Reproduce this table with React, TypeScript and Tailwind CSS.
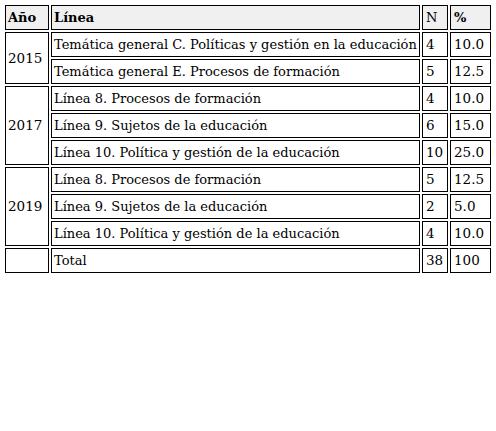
import React from "react";

type Row = { year?: string; span?: number; line: string; n: string; p: string };

const rows: Row[] = [
  { year: "2015", span: 2, line: "Temática general C. Políticas y gestión en la educación", n: "4", p: "10.0" },
  { line: "Temática general E. Procesos de formación", n: "5", p: "12.5" },
  { year: "2017", span: 3, line: "Línea 8. Procesos de formación", n: "4", p: "10.0" },
  { line: "Línea 9. Sujetos de la educación", n: "6", p: "15.0" },
  { line: "Línea 10. Política y gestión de la educación", n: "10", p: "25.0" },
  { year: "2019", span: 3, line: "Línea 8. Procesos de formación", n: "5", p: "12.5" },
  { line: "Línea 9. Sujetos de la educación", n: "2", p: "5.0" },
  { line: "Línea 10. Política y gestión de la educación", n: "4", p: "10.0" },
];

export default function App() {
  const td = "border border-black px-[2px] py-0 h-[25px] align-middle";
  const num = "border border-black pl-[3px] pr-0 py-0 h-[25px] align-middle text-[13.5px]";
  const th = "border border-black bg-[#f0f0f0] px-[2px] py-0 h-[25px] text-left align-middle";
  return (
    <div className="w-[496px] h-[431px] bg-white p-[3px] text-black text-[13px] leading-[19px]" style={{ fontFamily: '"DejaVu Serif", serif' }}>
      <table className="border-separate border-spacing-[2px] table-fixed w-[490px]">
        <colgroup>
          <col className="w-[44px]" />
          <col className="w-[369px]" />
          <col className="w-[26px]" />
          <col className="w-[41px]" />
        </colgroup>
        <thead>
          <tr>
            <th className={th + " font-bold"}>Año</th>
            <th className={th + " font-bold"}>Línea</th>
            <th className={th + " font-normal pl-[3px]"}>N</th>
            <th className={th + " font-bold pl-[3px]"}>%</th>
          </tr>
        </thead>
        <tbody>
          {rows.map((r, i) => (
            <tr key={i}>
              {r.year && (
                <td rowSpan={r.span} className={td + " text-[13.5px]"}>
                  {r.year}
                </td>
              )}
              <td className={td + " whitespace-nowrap"}>{r.line}</td>
              <td className={num}>{r.n}</td>
              <td className={num}>{r.p}</td>
            </tr>
          ))}
          <tr>
            <td className={td}></td>
            <td className={td}>Total</td>
            <td className={num}>38</td>
            <td className={num}>100</td>
          </tr>
        </tbody>
      </table>
    </div>
  );
}
